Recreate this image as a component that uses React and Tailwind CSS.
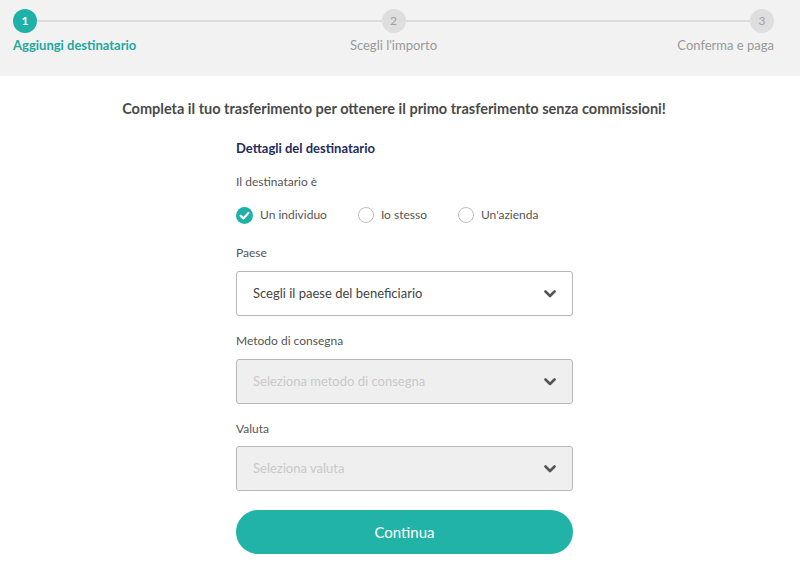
import React, { useState } from "react";

const Chevron = () => (
  <svg width="12" height="8" viewBox="0 0 12 8" fill="none">
    <path d="M1.5 1.5 L6 6 L10.5 1.5" stroke="#555" strokeWidth="2.6" strokeLinecap="round" strokeLinejoin="round" />
  </svg>
);

const Step = ({ n, active }) => (
  <div
    className={
      active
        ? "w-6 h-6 rounded-full bg-[#1fb1a7] text-white text-[12px] font-bold flex items-center justify-center shrink-0"
        : "w-6 h-6 rounded-full bg-[#dedede] text-[#a0a0a0] text-[12px] flex items-center justify-center shrink-0"
    }
  >
    {n}
  </div>
);

const Select = ({ placeholder, disabled }) => (
  <div
    className={
      disabled
        ? "h-[45px] border border-[#b8b8b8] rounded-[3px] bg-[#efefef] flex items-center justify-between pl-4 pr-4"
        : "h-[45px] border border-[#b8b8b8] rounded-[3px] bg-white flex items-center justify-between pl-4 pr-4"
    }
  >
    <span className={disabled ? "text-[13px] text-[#c9c9c9]" : "text-[13px] text-[#444]"}>
      {placeholder}
    </span>
    <Chevron />
  </div>
);

const Radio = ({ label, checked, onClick }) => (
  <button onClick={onClick} className="flex items-center gap-[7px]">
    {checked ? (
      <svg width="17" height="17" viewBox="0 0 17 17">
        <circle cx="8.5" cy="8.5" r="8.5" fill="#1fb1a7" />
        <path d="M4.6 8.8 L7.3 11.4 L12.4 6" stroke="#fff" strokeWidth="2.2" fill="none" strokeLinecap="round" strokeLinejoin="round" />
      </svg>
    ) : (
      <span className="w-[16px] h-[16px] rounded-full border border-[#bdbdbd] bg-white" />
    )}
    <span className="text-[12px] text-[#555]">{label}</span>
  </button>
);

export default function App() {
  const [kind, setKind] = useState("individuo");

  return (
    <div className="w-[800px] h-[564px] bg-white font-['Lato',sans-serif] overflow-hidden">
      {/* stepper */}
      <div className="bg-[#f2f2f2] h-[76px] pl-[13px] pr-[26px] pt-[9px]">
        <div className="flex items-center">
          <Step n="1" active />
          <div className="flex-1 h-[2px] bg-[#dcdcdc]" />
          <Step n="2" />
          <div className="flex-1 h-[2px] bg-[#dcdcdc]" />
          <Step n="3" />
        </div>
        <div className="grid grid-cols-3 mt-[3px] text-[13px]">
          <div className="text-[#1fa89e] font-bold">Aggiungi destinatario</div>
          <div className="text-center text-[#999]">Scegli l'importo</div>
          <div className="text-right text-[#999]">Conferma e paga</div>
        </div>
      </div>

      <h1 className="text-center text-[14.5px] font-bold text-[#4a4a4a] mt-[22px] ml-[-12px]">
        Completa il tuo trasferimento per ottenere il primo trasferimento senza commissioni!
      </h1>

      <div className="w-[337px] mt-[19px] ml-[236px]">
        <h2 className="text-[13px] font-bold text-[#1e2d5c]">Dettagli del destinatario</h2>
        <p className="text-[12px] text-[#555] mt-[15px]">Il destinatario è</p>
        <div className="flex items-center mt-[15px] gap-[31px]">
          <Radio label="Un individuo" checked={kind === "individuo"} onClick={() => setKind("individuo")} />
          <Radio label="Io stesso" checked={kind === "io"} onClick={() => setKind("io")} />
          <Radio label="Un'azienda" checked={kind === "azienda"} onClick={() => setKind("azienda")} />
        </div>

        <p className="text-[12px] text-[#555] mt-[20px]">Paese</p>
        <div className="mt-[9px]">
          <Select placeholder="Scegli il paese del beneficiario" />
        </div>

        <p className="text-[12px] text-[#555] mt-[16px]">Metodo di consegna</p>
        <div className="mt-[9px]">
          <Select placeholder="Seleziona metodo di consegna" disabled />
        </div>

        <p className="text-[12px] text-[#555] mt-[16px]">Valuta</p>
        <div className="mt-[8px]">
          <Select placeholder="Seleziona valuta" disabled />
        </div>

        <button className="w-full h-[44px] mt-[19px] rounded-full bg-[#22b3a8] text-white text-[15px]">
          Continua
        </button>
      </div>
    </div>
  );
}
